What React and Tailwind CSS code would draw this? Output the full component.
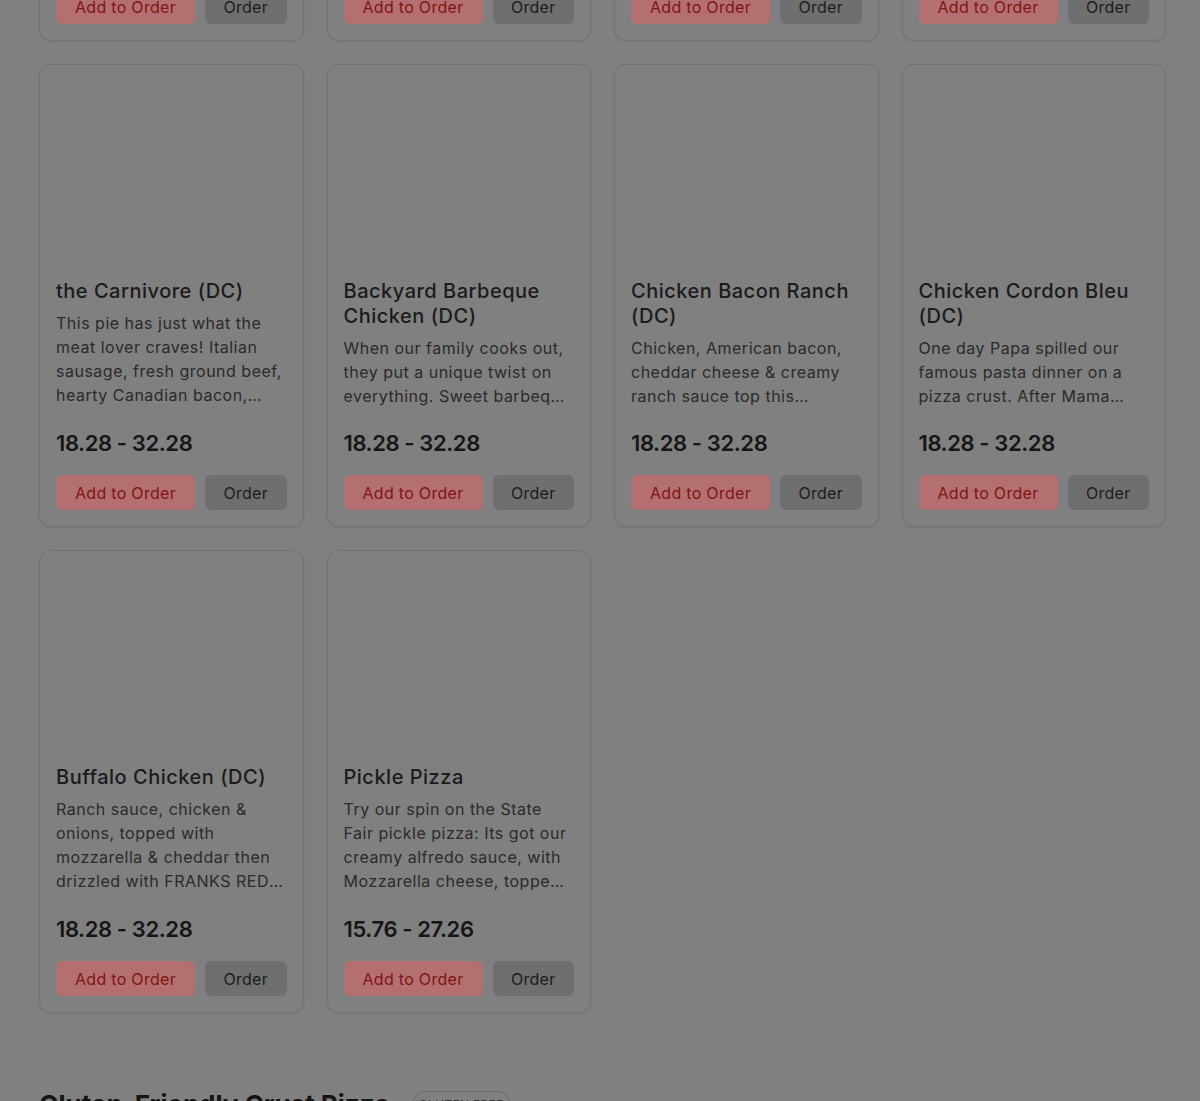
const font = { fontFamily: 'Inter, "Noto Sans", sans-serif' };

const topRow = [
  { name: 'Cheese Pizza (DC)', desc: 'Our classic cheese pizza with mozzarella and our house red sauce on a dairy-free crust.', price: '14.28 - 26.28', clamp: 4 },
  { name: 'Pepperoni (DC)', desc: 'Loaded with pepperoni and mozzarella cheese over our signature red sauce.', price: '15.28 - 27.28', clamp: 4 },
  { name: 'Veggie Delight (DC)', desc: 'Fresh green peppers, onions, mushrooms, black olives and tomatoes.', price: '17.28 - 30.28', clamp: 4 },
  { name: 'Hawaiian (DC)', desc: 'Canadian bacon and pineapple tidbits on a bed of mozzarella cheese.', price: '16.28 - 29.28', clamp: 4 },
];

const pizzas = [
  {
    name: 'the Carnivore (DC)',
    desc: 'This pie has just what the meat lover craves! Italian sausage, fresh ground beef, hearty Canadian bacon, pepperoni and crispy bacon all under a blanket of mozzarella.',
    price: '18.28 - 32.28',
    clamp: 4,
  },
  {
    name: 'Backyard Barbeque Chicken (DC)',
    desc: 'When our family cooks out, they put a unique twist on everything. Sweet barbeque sauce, grilled chicken, red onions and mozzarella.',
    price: '18.28 - 32.28',
    clamp: 3,
  },
  {
    name: 'Chicken Bacon Ranch (DC)',
    desc: 'Chicken, American bacon, cheddar cheese & creamy ranch sauce top this delightful pie, finished with mozzarella.',
    price: '18.28 - 32.28',
    clamp: 3,
  },
  {
    name: 'Chicken Cordon Bleu (DC)',
    desc: 'One day Papa spilled our famous pasta dinner on a pizza crust. After Mama tasted it, a new favorite was born.',
    price: '18.28 - 32.28',
    clamp: 3,
  },
  {
    name: 'Buffalo Chicken (DC)',
    desc: 'Ranch sauce, chicken & onions, topped with mozzarella & cheddar then drizzled with FRANKS RED HOT buffalo sauce.',
    price: '18.28 - 32.28',
    clamp: 4,
  },
  {
    name: 'Pickle Pizza',
    desc: 'Try our spin on the State Fair pickle pizza: Its got our creamy alfredo sauce, with Mozzarella cheese, topped with dill pickles and a sprinkle of dill.',
    price: '15.76 - 27.26',
    clamp: 4,
  },
];

function PizzaCard({ pizza }) {
  return (
    <article className="flex flex-col rounded-xl border border-[#727272] bg-[#808080] p-4 shadow-[0_1px_3px_rgba(0,0,0,0.08)]">
      <div className="mb-2 h-[190px] rounded-lg" />
      <div className="h-[128px] overflow-hidden">
        <h3 className="text-xl leading-[25px] font-medium tracking-[0.5px] text-[#1b1b1b]">
          {pizza.name}
        </h3>
        <p
          className={`mt-[7px] text-base leading-6 tracking-[0.5px] text-[#2a2a2a] ${
            pizza.clamp === 4 ? 'line-clamp-4' : 'line-clamp-3'
          }`}
        >
          {pizza.desc}
        </p>
      </div>
      <p className="mt-5 text-[22px] leading-8 font-semibold tracking-[-0.4px] text-[#161616]">
        {pizza.price}
      </p>
      <div className="mt-4 flex gap-[10px]">
        <button
          type="button"
          className="h-[35px] w-[139px] rounded-md bg-[#b47070] text-base tracking-[0.3px] text-[#801414]"
        >
          Add to Order
        </button>
        <button
          type="button"
          className="h-[35px] flex-1 rounded-md bg-[#6f6f6f] text-base tracking-[0.3px] text-[#1c1c1c]"
        >
          Order
        </button>
      </div>
    </article>
  );
}

export default function App() {
  return (
    <div className="h-[1101px] overflow-hidden bg-[#808080]" style={font}>
      <div className="mt-[-422px] pl-[39px]">
        <div className="grid w-[1127px] grid-cols-4 gap-[23px]">
          {topRow.map((p) => (
            <PizzaCard key={p.name} pizza={p} />
          ))}
          {pizzas.map((p) => (
            <PizzaCard key={p.name} pizza={p} />
          ))}
        </div>

        <div className="mt-[74px] flex items-center gap-[22px]">
          <h2 className="text-[26px] leading-9 font-bold text-[#141414]">Gluten-Friendly Crust Pizza</h2>
          <span className="flex h-7 w-[99px] items-center justify-center rounded-full border border-[#6a6a6a] text-xs tracking-wide text-[#333] uppercase">
            Gluten Free
          </span>
        </div>
      </div>
    </div>
  );
}
